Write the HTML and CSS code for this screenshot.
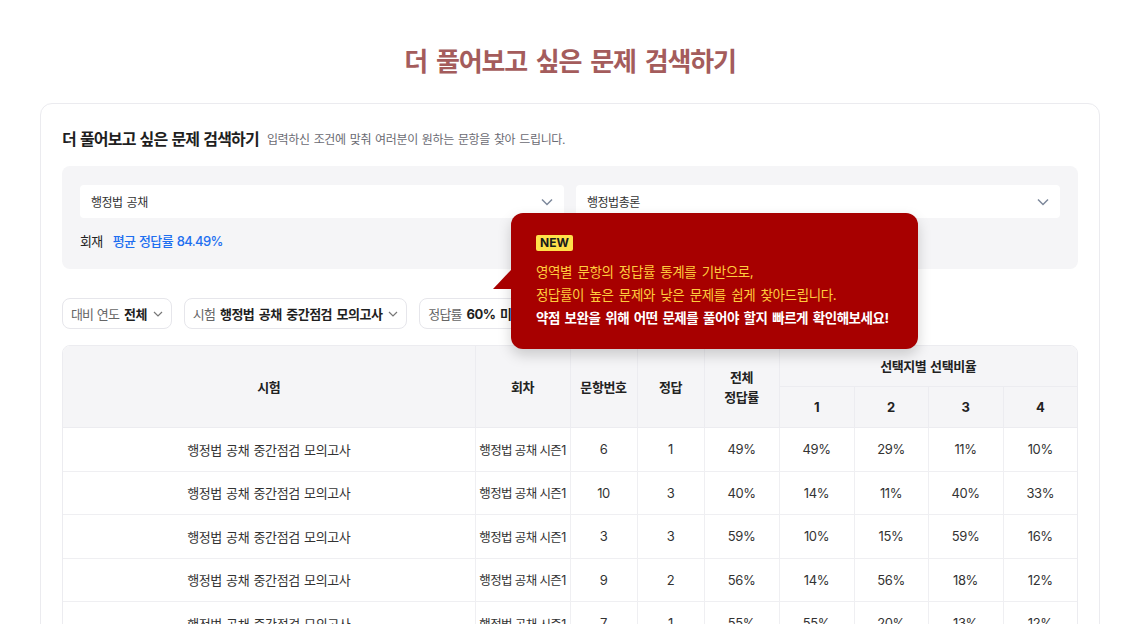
FILE: index.html
```html
<!DOCTYPE html>
<html lang="ko">
<head>
    <meta charset="UTF-8">
    <title>더 풀어보고 싶은 문제 검색하기</title>

    <link rel="stylesheet" href="styles.css">

</head>
<body>
<div class="page">
    <h1 class="page_title">더 풀어보고 싶은 문제 검색하기</h1>

    <div class="card">
        <div class="card_head">
            <h2>더 풀어보고 싶은 문제 검색하기</h2>
            <span class="card_desc">입력하신 조건에 맞춰 여러분이 원하는 문항을 찾아 드립니다.</span>
        </div>

        <div class="search_box">
            <div class="select_row">
                <div class="select">
                    <span>행정법 공채</span>
                    <svg width="12" height="8" viewBox="0 0 12 8"><path d="M1 1.5l5 5 5-5" fill="none" stroke="#7d889b" stroke-width="1.5"/></svg>
                </div>
                <div class="select">
                    <span>행정법총론</span>
                    <svg width="12" height="8" viewBox="0 0 12 8"><path d="M1 1.5l5 5 5-5" fill="none" stroke="#7d889b" stroke-width="1.5"/></svg>
                </div>
            </div>
            <div class="avg_row">
                <span class="avg_label">회재</span>
                <span class="avg_value">평균 정답률 84.49%</span>
            </div>
        </div>

        <div class="filter_row">
            <div class="pill">
                <span class="pill_label">대비 연도</span>
                <span class="pill_value">전체</span>
                <svg width="10" height="6" viewBox="0 0 10 6"><path d="M1 1l4 4 4-4" fill="none" stroke="#777" stroke-width="1.2"/></svg>
            </div>
            <div class="pill">
                <span class="pill_label">시험</span>
                <span class="pill_value">행정법 공채 중간점검 모의고사</span>
                <svg width="10" height="6" viewBox="0 0 10 6"><path d="M1 1l4 4 4-4" fill="none" stroke="#777" stroke-width="1.2"/></svg>
            </div>
            <div class="pill">
                <span class="pill_label">정답률</span>
                <span class="pill_value">60% 미만</span>
                <svg width="10" height="6" viewBox="0 0 10 6"><path d="M1 1l4 4 4-4" fill="none" stroke="#777" stroke-width="1.2"/></svg>
            </div>
        </div>

        <div class="table_wrap">
            <table class="result">
                <colgroup>
                    <col style="width:412px">
                    <col style="width:95px">
                    <col style="width:67px">
                    <col style="width:67px">
                    <col style="width:75px">
                    <col style="width:75px">
                    <col style="width:74px">
                    <col style="width:75px">
                    <col style="width:74px">
                </colgroup>
                <thead>
                <tr>
                    <th rowspan="2">시험</th>
                    <th rowspan="2">회차</th>
                    <th rowspan="2">문항번호</th>
                    <th rowspan="2">정답</th>
                    <th rowspan="2">전체<br>정답률</th>
                    <th colspan="4" class="last">선택지별 선택비율</th>
                </tr>
                <tr>
                    <th>1</th>
                    <th>2</th>
                    <th>3</th>
                    <th class="last">4</th>
                </tr>
                </thead>
                <tbody>
                <tr>
                    <td>행정법 공채 중간점검 모의고사</td><td class="round">행정법 공채 시즌1</td>
                    <td>6</td><td>1</td><td>49%</td><td>49%</td><td>29%</td><td>11%</td><td class="last">10%</td>
                </tr>
                <tr>
                    <td>행정법 공채 중간점검 모의고사</td><td class="round">행정법 공채 시즌1</td>
                    <td>10</td><td>3</td><td>40%</td><td>14%</td><td>11%</td><td>40%</td><td class="last">33%</td>
                </tr>
                <tr>
                    <td>행정법 공채 중간점검 모의고사</td><td class="round">행정법 공채 시즌1</td>
                    <td>3</td><td>3</td><td>59%</td><td>10%</td><td>15%</td><td>59%</td><td class="last">16%</td>
                </tr>
                <tr>
                    <td>행정법 공채 중간점검 모의고사</td><td class="round">행정법 공채 시즌1</td>
                    <td>9</td><td>2</td><td>56%</td><td>14%</td><td>56%</td><td>18%</td><td class="last">12%</td>
                </tr>
                <tr>
                    <td>행정법 공채 중간점검 모의고사</td><td class="round">행정법 공채 시즌1</td>
                    <td>7</td><td>1</td><td>55%</td><td>55%</td><td>20%</td><td>13%</td><td class="last">12%</td>
                </tr>
                </tbody>
            </table>
        </div>

        <div class="tooltip">
            <span class="badge">NEW</span>
            <p class="tip_text">영역별 문항의 정답률 통계를 기반으로,<br>정답률이 높은 문제와 낮은 문제를 쉽게 찾아드립니다.</p>
            <p class="tip_strong">약점 보완을 위해 어떤 문제를 풀어야 할지 빠르게 확인해보세요!</p>
        </div>
    </div>
</div>
</body>
</html>
```

FILE: styles.css
```css
html, body {
    overflow: hidden;
}

body {
    margin: 0;
    background: #fff;
    font-family: Inter, "Noto Sans CJK KR", sans-serif;
    color: #222;
}

.page {
    width: 1060px;
    margin: 0 auto;
    padding-top: 44px;
}

.page_title {
    margin: 0;
    text-align: center;
    font-size: 26px;
    line-height: 36px;
    font-weight: 700;
    color: #a45c5c;
    letter-spacing: -0.045em;
    word-spacing: 4px;
}

.card {
    position: relative;
    margin-top: 23px;
    height: 700px;
    border: 1px solid #ebebef;
    border-radius: 12px;
    padding: 23px 21px 0;
}

.card_head {
    display: flex;
    align-items: center;
    gap: 8px;
    height: 22px;
}

.card_head h2 {
    margin: 0;
    font-size: 16px;
    font-weight: 700;
    letter-spacing: -0.05em;
    word-spacing: 1px;
    color: #1f1f1f;
}

.card_desc {
    font-size: 12px;
    color: #6b6b73;
    letter-spacing: -0.03em;
    word-spacing: 1px;
}

.search_box {
    margin-top: 17px;
    background: #f5f5f7;
    border-radius: 8px;
    padding: 19px 18px 20px;
}

.select_row {
    display: flex;
    gap: 12px;
}

.select {
    flex: 1;
    height: 33px;
    background: #fff;
    border-radius: 4px;
    display: flex;
    align-items: center;
    justify-content: space-between;
    padding: 0 11px;
    font-size: 12px;
    color: #333;
    letter-spacing: -0.04em;
    word-spacing: 1px;
}

.avg_row {
    margin-top: 13px;
    height: 18px;
    display: flex;
    align-items: center;
    gap: 10px;
    font-size: 13px;
    letter-spacing: -0.05em;
    word-spacing: 1px;
}

.avg_label {
    color: #222;
}

.avg_value {
    color: #1e6ff0;
    font-weight: 500;
}

.filter_row {
    margin-top: 29px;
    display: flex;
    gap: 12px;
}

.pill {
    height: 31px;
    box-sizing: border-box;
    border: 1px solid #e6e6eb;
    border-radius: 8px;
    display: flex;
    align-items: center;
    gap: 5px;
    padding: 0 8px;
    font-size: 13px;
    letter-spacing: -0.07em;
    word-spacing: 1px;
    white-space: nowrap;
}

.pill_label {
    color: #666;
}

.pill_value {
    color: #1f1f1f;
    font-weight: 700;
    letter-spacing: -0.04em;
    word-spacing: 2px;
}

.pill svg {
    margin-left: 1px;
}

.table_wrap {
    margin-top: 16px;
    border: 1px solid #ececf0;
    border-radius: 8px;
    overflow: hidden;
}

.result {
    width: 100%;
    border-collapse: collapse;
    table-layout: fixed;
    font-size: 13px;
    letter-spacing: -0.03em;
    word-spacing: 1px;
}

.result th {
    height: 40px;
    background: #f5f5f7;
    font-weight: 700;
    color: #222;
    line-height: 20px;
    border-right: 1px solid #ececf0;
    border-bottom: 1px solid #ececf0;
    padding: 0;
}

.result td {
    height: 42.5px;
    text-align: center;
    color: #333;
    border-right: 1px solid #efeff2;
    border-bottom: 1px solid #efeff2;
    padding: 0;
}

.result td.round {
    font-size: 12.5px;
    letter-spacing: -0.05em;
    word-spacing: 0;
    white-space: nowrap;
}

.result .last {
    border-right: none;
}

.tooltip {
    position: absolute;
    left: 470px;
    top: 109px;
    width: 407px;
    height: 136px;
    box-sizing: border-box;
    padding: 18px 25px 0;
    background: #a70000;
    border-radius: 12px;
    box-shadow: 0 6px 14px rgba(0, 0, 0, 0.18);
    font-size: 13.5px;
    line-height: 23px;
    letter-spacing: -0.03em;
    word-spacing: 2px;
    white-space: nowrap;
}

.tooltip:before {
    content: "";
    position: absolute;
    left: -18px;
    top: 57px;
    width: 0;
    height: 0;
    border-left: 18px solid transparent;
    border-bottom: 19px solid #a70000;
}

.badge {
    display: inline-block;
    height: 16px;
    line-height: 16px;
    padding: 0 4px;
    background: #ffe04a;
    border-radius: 2px;
    font-size: 12px;
    font-weight: 700;
    color: #1a1a1a;
    letter-spacing: 0;
}

.tip_text {
    margin: 7px 0 0;
    color: #ffcc3d;
}

.tip_strong {
    margin: 0;
    color: #fff;
    font-weight: 700;
    letter-spacing: -0.035em;
    word-spacing: 2px;
}
```
